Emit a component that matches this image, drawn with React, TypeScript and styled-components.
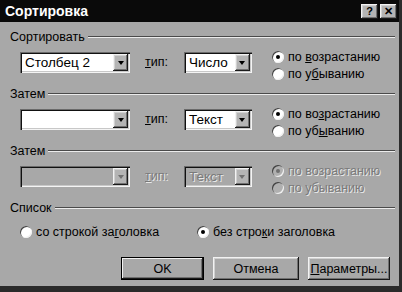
import React from "react";
import styled, { createGlobalStyle, css } from "styled-components";

const GlobalStyle = createGlobalStyle`
  html, body { margin: 0; padding: 0; background: #a8a8a8; }
  * { box-sizing: border-box; }
`;

const raised = css`
  box-shadow: inset -1px -1px 0 #1a1a1a, inset 1px 1px 0 #f2f2f2,
    inset -2px -2px 0 #707070, inset 2px 2px 0 #d0d0d0;
`;

const sunken = css`
  box-shadow: inset 1px 1px 0 #6a6a6a, inset 2px 2px 0 #111,
    inset -1px -1px 0 #f4f4f4, inset -2px -2px 0 #c8c8c8;
`;

const Window = styled.div`
  width: 402px;
  height: 292px;
  display: flex;
  flex-direction: column;
  background: #a8a8a8;
  border-right: 3px solid #2c2c2c;
  border-bottom: 6px solid #2a2a2a;
  font-family: "Liberation Sans", Arial, sans-serif;
  font-size: 12.5px;
  color: #000;
  overflow: hidden;
`;

const TitleBar = styled.div`
  height: 22px;
  flex: none;
  background: #0a0a0a;
  display: flex;
  align-items: center;
  justify-content: space-between;
  padding: 0 2px 0 5px;
`;

const Title = styled.span`
  color: #fff;
  font-weight: bold;
  font-size: 14px;
`;

const TitleButtons = styled.div`
  display: flex;
  gap: 2px;
`;

const TitleButton = styled.div`
  width: 17px;
  height: 15px;
  background: #b4b4b4;
  ${raised};
  display: flex;
  align-items: center;
  justify-content: center;
  font-weight: bold;
  font-size: 11px;
  line-height: 1;
`;

const Body = styled.div`
  flex: 1;
  display: flex;
  flex-direction: column;
  padding: 8px 4px 0 10px;
`;

const Group = styled.div`
  display: flex;
  flex-direction: column;
  margin-bottom: 5px;
`;

const GroupHeader = styled.div`
  display: flex;
  align-items: center;
  gap: 3px;
  height: 14px;
`;

const HeaderLine = styled.div`
  flex: 1;
  border-top: 1px solid #4a4a4a;
  border-bottom: 1px solid #ececec;
`;

const Row = styled.div`
  display: flex;
  align-items: flex-start;
  margin-top: 8px;
  padding-left: 10px;
`;

const Combo = styled.div<{ $w: number; $disabled?: boolean }>`
  width: ${(p) => p.$w}px;
  height: 21px;
  flex: none;
  display: flex;
  padding: 2px;
  background: ${(p) => (p.$disabled ? "#a8a8a8" : "#fff")};
  ${sunken};
`;

const ComboText = styled.span<{ $disabled?: boolean }>`
  flex: 1;
  padding-left: 3px;
  line-height: 17px;
  font-size: 13.5px;
  color: ${(p) => (p.$disabled ? "#7a7a7a" : "#000")};
  text-shadow: ${(p) => (p.$disabled ? "1px 1px 0 #e8e8e8" : "none")};
`;

const ComboButton = styled.div`
  width: 15px;
  height: 17px;
  background: #b4b4b4;
  ${raised};
  display: flex;
  align-items: center;
  justify-content: center;
`;

const Arrow = styled.div<{ $disabled?: boolean }>`
  width: 0;
  height: 0;
  border-left: 3.5px solid transparent;
  border-right: 3.5px solid transparent;
  border-top: 4px solid ${(p) => (p.$disabled ? "#707070" : "#000")};
`;

const TypeLabel = styled.span<{ $disabled?: boolean }>`
  margin: 0 16px 0 15px;
  line-height: 21px;
  color: ${(p) => (p.$disabled ? "#7a7a7a" : "#000")};
  text-shadow: ${(p) => (p.$disabled ? "1px 1px 0 #e8e8e8" : "none")};
`;

const RadioGroup = styled.div`
  display: flex;
  flex-direction: column;
  margin-left: 20px;
  margin-top: -4px;
`;

const RadioRow = styled.div`
  display: flex;
  align-items: center;
  margin-top: 8px;
  padding-left: 10px;
`;

const RadioLabel = styled.label<{ $disabled?: boolean; $w?: number }>`
  display: flex;
  align-items: center;
  gap: 4px;
  height: 17px;
  width: ${(p) => (p.$w ? `${p.$w}px` : "auto")};
  color: ${(p) => (p.$disabled ? "#7a7a7a" : "#000")};
  text-shadow: ${(p) => (p.$disabled ? "1px 1px 0 #e8e8e8" : "none")};
`;

const RadioCircle = styled.span<{ $checked?: boolean; $disabled?: boolean }>`
  width: 12px;
  height: 12px;
  flex: none;
  border-radius: 50%;
  background: ${(p) => (p.$disabled ? "#b0b0b0" : "#fff")};
  box-shadow: inset 1px 1px 0 #404040, inset -1px -1px 0 #f0f0f0;
  display: flex;
  align-items: center;
  justify-content: center;
  &::after {
    content: "";
    width: 4px;
    height: 4px;
    border-radius: 50%;
    background: ${(p) => (p.$disabled ? "#707070" : "#000")};
    display: ${(p) => (p.$checked ? "block" : "none")};
  }
`;

const ButtonRow = styled.div`
  display: flex;
  justify-content: flex-end;
  gap: 9px;
  margin-top: 12px;
  padding-right: 5px;
`;

const PushButton = styled.div<{ $default?: boolean; $w: number }>`
  width: ${(p) => p.$w}px;
  height: 23px;
  background: #a8a8a8;
  display: flex;
  align-items: center;
  justify-content: center;
  font-size: 12.5px;
  ${(p) =>
    p.$default
      ? css`
          box-shadow: inset 0 0 0 1px #000, inset -2px -2px 0 #1a1a1a,
            inset 2px 2px 0 #f2f2f2, inset -3px -3px 0 #707070;
        `
      : raised};
`;

type SortRowProps = {
  label: string;
  value: string;
  type: string;
  asc: React.ReactNode;
  desc: React.ReactNode;
  disabled?: boolean;
};

function SortGroup({ label, value, type, asc, desc, disabled }: SortRowProps) {
  return (
    <Group>
      <GroupHeader>
        <span>{label}</span>
        <HeaderLine />
      </GroupHeader>
      <Row>
        <Combo $w={110} $disabled={disabled}>
          <ComboText $disabled={disabled}>{value}</ComboText>
          <ComboButton>
            <Arrow $disabled={disabled} />
          </ComboButton>
        </Combo>
        <TypeLabel $disabled={disabled}>
          <u>т</u>ип:
        </TypeLabel>
        <Combo $w={68} $disabled={disabled}>
          <ComboText $disabled={disabled}>{type}</ComboText>
          <ComboButton>
            <Arrow $disabled={disabled} />
          </ComboButton>
        </Combo>
        <RadioGroup>
          <RadioLabel $disabled={disabled}>
            <RadioCircle $checked $disabled={disabled} />
            {asc}
          </RadioLabel>
          <RadioLabel $disabled={disabled}>
            <RadioCircle $disabled={disabled} />
            {desc}
          </RadioLabel>
        </RadioGroup>
      </Row>
    </Group>
  );
}

export default function App() {
  return (
    <>
      <GlobalStyle />
      <Window>
        <TitleBar>
          <Title>Сортировка</Title>
          <TitleButtons>
            <TitleButton>?</TitleButton>
            <TitleButton>✕</TitleButton>
          </TitleButtons>
        </TitleBar>
        <Body>
          <SortGroup
            label="Сортировать"
            value="Столбец 2"
            type="Число"
            asc={<span>по <u>в</u>озрастанию</span>}
            desc={<span>по у<u>б</u>ыванию</span>}
          />
          <SortGroup
            label="Затем"
            value=""
            type="Текст"
            asc={<span>по во<u>з</u>растанию</span>}
            desc={<span>по уб<u>ы</u>ванию</span>}
          />
          <SortGroup
            label="Затем"
            value=""
            type="Текст"
            asc={<span>по возрастанию</span>}
            desc={<span>по убыванию</span>}
            disabled
          />
          <Group>
            <GroupHeader>
              <span>Список</span>
              <HeaderLine />
            </GroupHeader>
            <RadioRow>
              <RadioLabel $w={177}>
                <RadioCircle />
                <span>со строкой за<u>г</u>оловка</span>
              </RadioLabel>
              <RadioLabel>
                <RadioCircle $checked />
                <span>без стро<u>к</u>и заголовка</span>
              </RadioLabel>
            </RadioRow>
          </Group>
          <ButtonRow>
            <PushButton $default $w={83}>OK</PushButton>
            <PushButton $w={86}>Отмена</PushButton>
            <PushButton $w={82}>
              <span><u>П</u>араметры...</span>
            </PushButton>
          </ButtonRow>
        </Body>
      </Window>
    </>
  );
}
